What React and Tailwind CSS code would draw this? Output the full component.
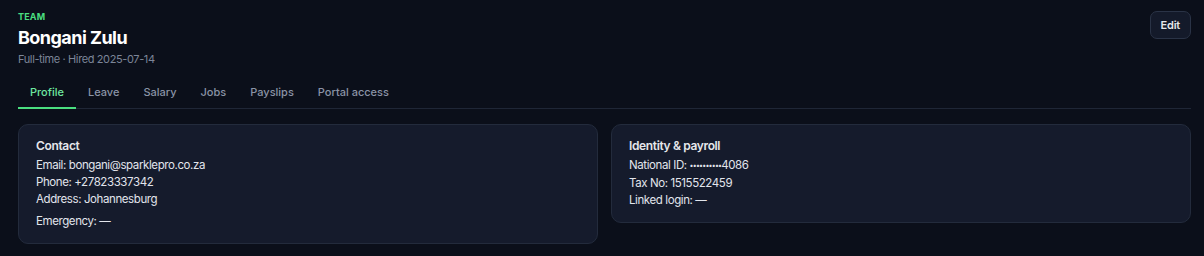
import { useState } from 'react'

const tabs = ['Profile', 'Leave', 'Salary', 'Jobs', 'Payslips', 'Portal access']

function Card({ title, children }) {
  return (
    <section className="rounded-[10px] border border-[#232b3c] bg-[#151b2c] px-[17px] pt-[12px] pb-[13px]">
      <h3 className="text-[12px] font-semibold leading-[17px] tracking-[-0.03em] text-[#e5e7eb]">{title}</h3>
      <div className="mt-[3px] text-[11.5px] leading-[17px] tracking-[-0.035em] text-[#e2e5ec]">{children}</div>
    </section>
  )
}

export default function App() {
  const [tab, setTab] = useState('Profile')

  return (
    <div className="min-h-[256px] bg-[#0b0f1a] pl-[18px] pr-[13px] pt-[11px] font-['Inter',sans-serif]">
      <div className="flex items-start justify-between">
        <div>
          <div className="text-[9px] font-bold uppercase leading-[12px] tracking-[0.02em] text-[#4ade80]">Team</div>
          <h1 className="mt-[3px] text-[18px] font-bold leading-[24px] tracking-[-0.03em] text-white">Bongani Zulu</h1>
          <p className="mt-[1px] text-[11px] leading-[16px] tracking-[-0.035em] text-[#7c8598]">Full-time · Hired 2025-07-14</p>
        </div>
        <button className="rounded-[7px] border border-[#2a3346] bg-[#141a2a] px-[10px] py-[6px] text-[11px] font-semibold leading-[14px] tracking-[-0.02em] text-[#e5e7eb]">
          Edit
        </button>
      </div>

      <nav className="mt-[13px] flex border-b border-[#1f2636]">
        {tabs.map((t) => (
          <button
            key={t}
            onClick={() => setTab(t)}
            className={
              'px-[12px] pb-[7px] pt-[4px] text-[11px] font-medium leading-[16px] -mb-px border-b-2 ' +
              (tab === t ? 'border-[#4ade80] text-[#6ee7a0]' : 'border-transparent text-[#8a93a6]')
            }
          >
            {t}
          </button>
        ))}
      </nav>

      <div className="mt-[15px] grid grid-cols-2 items-start gap-[13px]">
        <Card title="Contact">
          <p>Email: bongani@sparklepro.co.za</p>
          <p>Phone: +27823337342</p>
          <p>Address: Johannesburg</p>
          <p className="mt-[5px]">Emergency: —</p>
        </Card>
        <Card title="Identity & payroll">
          <p>
            National ID: <span className="relative -top-px text-[7px] tracking-[-0.11em]">••••••••••</span>4086
          </p>
          <p>Tax No: 1515522459</p>
          <p>Linked login: —</p>
        </Card>
      </div>
    </div>
  )
}
